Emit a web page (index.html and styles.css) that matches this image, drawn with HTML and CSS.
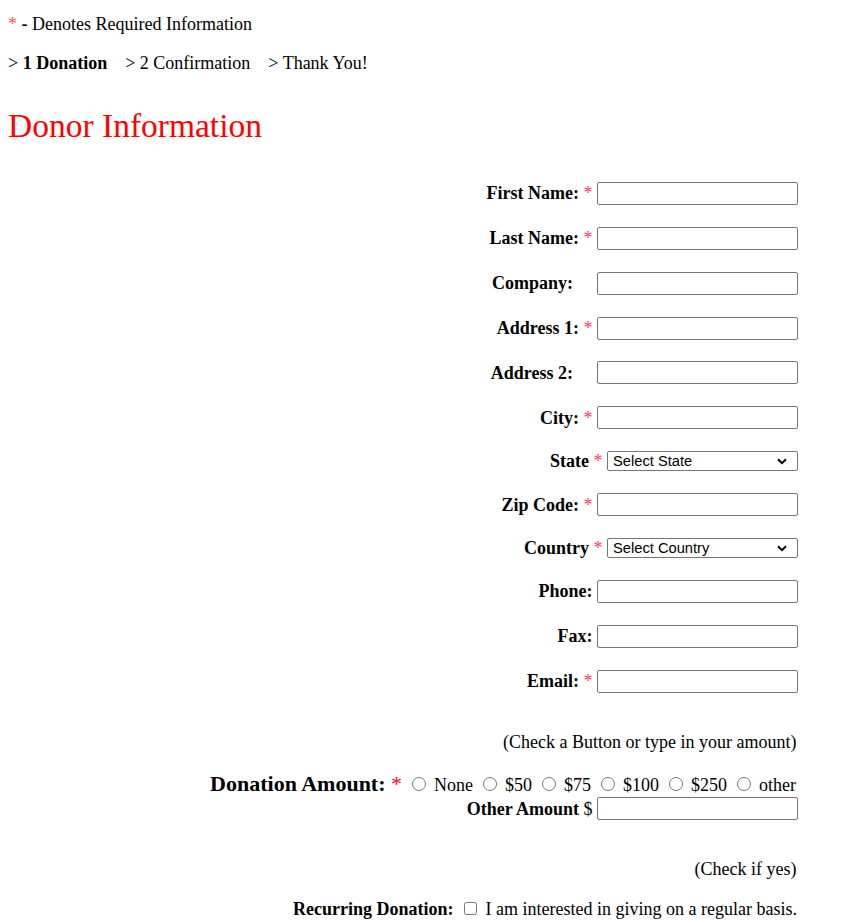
FILE: index.html
```html
<!DOCTYPE html>
<html lang="en">
<head>
<meta charset="utf-8">
<title>Donor Information</title>
<link rel="stylesheet" href="styles.css">
</head>
<body>
<div class="page">
  <p class="note"><span class="req-note">*</span> <b>-</b> Denotes Required Information</p>
  <p class="steps"><span class="step">&gt; <b>1 Donation</b></span><span class="step">&gt; 2 Confirmation</span><span class="step">&gt; Thank You!</span></p>
  <h1 class="title">Donor Information</h1>
  <form class="donor-form">
    <div class="row"><label class="lbl">First Name: <span class="req">*</span></label><input class="text" type="text"></div>
    <div class="row"><label class="lbl">Last Name: <span class="req">*</span></label><input class="text" type="text"></div>
    <div class="row"><label class="lbl lbl-pad">Company:</label><input class="text" type="text"></div>
    <div class="row"><label class="lbl">Address 1: <span class="req">*</span></label><input class="text" type="text"></div>
    <div class="row"><label class="lbl lbl-pad">Address 2:</label><input class="text" type="text"></div>
    <div class="row"><label class="lbl">City: <span class="req">*</span></label><input class="text" type="text"></div>
    <div class="row"><label class="lbl">State <span class="req">*</span></label><span class="select-wrap"><select class="select"><option>Select State</option><option>Alabama</option><option>Alaska</option></select><svg class="chev" width="10" height="7" viewBox="0 0 10 7"><polyline points="1,1.2 5,5.2 9,1.2" fill="none" stroke="#000" stroke-width="2"/></svg></span></div>
    <div class="row"><label class="lbl">Zip Code: <span class="req">*</span></label><input class="text" type="text"></div>
    <div class="row"><label class="lbl">Country <span class="req">*</span></label><span class="select-wrap"><select class="select"><option>Select Country</option><option>United States</option><option>Canada</option></select><svg class="chev" width="10" height="7" viewBox="0 0 10 7"><polyline points="1,1.2 5,5.2 9,1.2" fill="none" stroke="#000" stroke-width="2"/></svg></span></div>
    <div class="row"><label class="lbl">Phone:</label><input class="text" type="text"></div>
    <div class="row"><label class="lbl">Fax:</label><input class="text" type="text"></div>
    <div class="row"><label class="lbl">Email: <span class="req">*</span></label><input class="text" type="text"></div>

    <p class="hint hint-amount">(Check a Button or type in your amount)</p>
    <div class="amount-row"><span class="big-label"><b>Donation Amount:</b> <span class="req-big">*</span></span> <input class="radio" type="radio" name="amount"> None <input class="radio" type="radio" name="amount"> $50 <input class="radio" type="radio" name="amount"> $75 <input class="radio" type="radio" name="amount"> $100 <input class="radio" type="radio" name="amount"> $250 <input class="radio" type="radio" name="amount"> other</div>
    <div class="row other-row"><label class="lbl">Other Amount <span class="dollar">$</span></label><input class="text" type="text"></div>

    <p class="hint hint-yes">(Check if yes)</p>
    <div class="recurring-row"><b>Recurring Donation:</b> <input class="check" type="checkbox"> I am interested in giving on a regular basis.</div>
  </form>
</div>
</body>
</html>
```

FILE: styles.css
```css
body {
  margin: 0;
  background: #ffffff;
  color: #000000;
  font-family: "Liberation Serif", "Times New Roman", serif;
  font-size: 18px;
  line-height: 20px;
}

.page {
  padding: 14px 8px 0;
}

.note {
  margin: 0;
}

.req-note {
  color: #f05a46;
}

.steps {
  margin: 19px 0 0;
}

.step + .step {
  margin-left: 18px;
}

.title {
  margin: 34px 0 0;
  font-size: 33.5px;
  line-height: 38px;
  font-weight: normal;
  color: #ff0000;
}

.donor-form {
  width: 790px;
  margin-top: 26px;
}

.row {
  display: flex;
  justify-content: flex-end;
  align-items: center;
  padding: 10.95px 0;
}

.lbl {
  font-weight: bold;
  margin-right: 4.5px;
}

.lbl-pad {
  padding-right: 19.5px;
}

.req {
  color: #ff4060;
  font-weight: normal;
}

.dollar {
  font-weight: normal;
}

.text {
  box-sizing: border-box;
  width: 201px;
  height: 23px;
  margin: 0;
  padding: 1px 2px;
  border: 1px solid #767676;
  border-radius: 2px;
  font-family: "Liberation Sans", Arial, sans-serif;
  font-size: 13.33px;
  background: #ffffff;
}

.select-wrap {
  position: relative;
  display: block;
  width: 191px;
  height: 20px;
}

.select {
  -webkit-appearance: none;
  appearance: none;
  box-sizing: border-box;
  display: block;
  width: 191px;
  height: 20px;
  margin: 0;
  padding: 0 20px 0 5px;
  border: 1px solid #767676;
  border-radius: 2px;
  background: #ffffff;
  color: #000000;
  font-family: "Liberation Sans", Arial, sans-serif;
  font-size: 14.7px;
  line-height: 18px;
}

.chev {
  position: absolute;
  right: 11px;
  top: 7px;
  pointer-events: none;
}

.hint {
  margin: 0;
  text-align: right;
  padding-right: 1.5px;
}

.hint-amount {
  margin-top: 28.7px;
}

.amount-row {
  margin-top: 19.6px;
  text-align: right;
  line-height: 24px;
  padding-right: 2px;
}

.big-label {
  font-size: 22px;
}

.req-big {
  color: #ff0020;
}

.radio {
  width: 14px;
  height: 14px;
  margin: 3px 3.5px 0 5.5px;
}

.other-row {
  padding: 0;
  margin-top: 0.6px;
}

.hint-yes {
  margin-top: 38.7px;
}

.recurring-row {
  margin-top: 20px;
  text-align: right;
  padding-right: 1px;
}

.check {
  width: 13px;
  height: 13px;
  margin: 3px 4.5px 0 5.5px;
}
```
